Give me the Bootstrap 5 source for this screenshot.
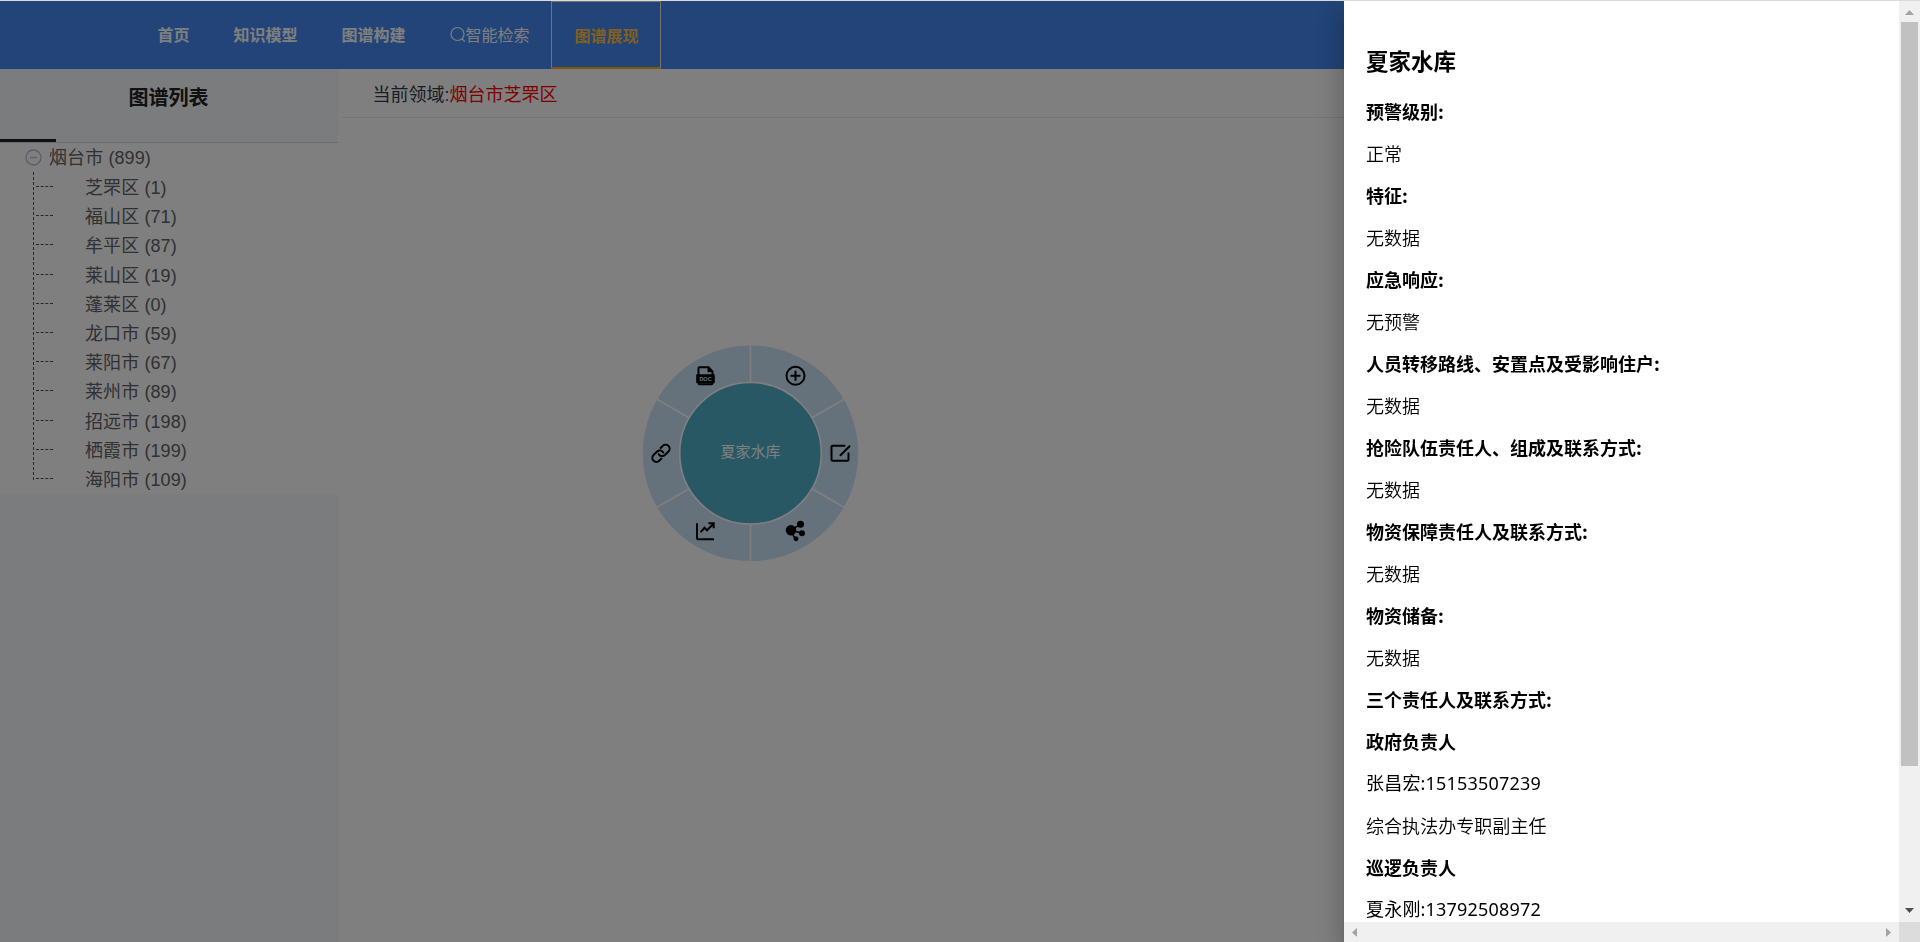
<!DOCTYPE html>
<html lang="zh-CN">
<head>
<meta charset="utf-8">
<meta name="viewport" content="width=device-width, initial-scale=1">
<title>图谱展现</title>
<link href="https://cdn.jsdelivr.net/npm/bootstrap@5.3.0/dist/css/bootstrap.min.css" rel="stylesheet">
<style>
  html, body { height: 100%; overflow: hidden; }
  body { font-family: "Liberation Sans", "Noto Sans CJK SC", sans-serif; color: #303133; background: #fff; font-size: 18px; }
  .topnav { height: 69px; background: #4488f0; border-top: 1px solid #dadada; padding-left: 135px; box-sizing: border-box; }
  .topnav .nav-link { color: #fff; font-size: 16px; line-height: 69px; height: 68px; padding: 0 21.5px 0 22.5px; border: 0; }
  .topnav .nav-link.current { color: #ffc040; line-height: 70px; border: 1px solid #e8e8e8; border-bottom: 2px solid #ffb01e; }
  .side { width: 338px; background: #f6f9fd; }
  .side-head { height: 74px; border-bottom: 1px solid #cfdce6; position: relative; }
  .side-head h1 { font-size: 20px; line-height: 58px; margin: 0 1px 0 0; color: #222; }
  .side-head::after { content: ""; position: absolute; left: 0; bottom: 0; width: 56px; height: 3px; background: #222; }
  .tree { background: #fff; height: 351px; color: #606266; }
  .tree-root { height: 29px; line-height: 31px; padding-left: 25px; gap: 7px; }
  .tree-root span { padding-top: 2px; letter-spacing: .1px; }
  .tree-kids { margin-left: 33px; position: relative; }
  .tree-kids li { height: 29.2px; line-height: 33px; padding-left: 52px; position: relative; letter-spacing: .1px; }
  .tree-kids li::before { content: ""; position: absolute; left: 3px; top: 14px; width: 17px; border-top: 1px dashed #4a4f62; }
  .tree-kids::before { content: ""; position: absolute; left: 0; top: 0; height: 308px; border-left: 1px dashed #4a4f62; }
  .domain { height: 49px; line-height: 52px; padding-left: 30.500px; margin-left: 4px; border-bottom: 1px solid #e8e8e8; color: #303848; }
  .domain span { color: #f00; }
  .wheel { width: 217px; height: 217px; margin: 227px 0 0 304px; display: block; }
  .veil { background: rgba(0,0,0,.5); z-index: 10; top: 1px; }
  .detail { z-index: 20; top: 1px; right: 0; bottom: 0; width: 576px; background: #fff; color: #000;
    font-family: "Noto Sans CJK SC", sans-serif; 
    box-shadow: 0 8px 10px -5px rgba(0,0,0,.2), 0 16px 24px 2px rgba(0,0,0,.14), 0 6px 30px 5px rgba(0,0,0,.12); clip-path: inset(0 0 0 -60px); }
  .topline { top: 0; height: 1px; background: #dadada; z-index: 30; }
  .detail-body { padding: 38px 0 0 22px; height: 921px; }
  .detail-body h2 { font-size: 22.5px; line-height: 42px; margin: 0 0 9px; font-weight: 700; }
  .detail-body p { font-size: 18px; line-height: 42px; margin: 0; height: 42px; white-space: nowrap; }
  .detail-body p:not(.fw-bold) { font-weight: 350; letter-spacing: .05px; }
  .detail-body p.phone:not(.fw-bold) { font-family: "Noto Sans", "Noto Sans CJK SC", sans-serif; font-weight: 400; letter-spacing: .2px; }
  .bar-v { width: 21px; background: #f0f0f0; }
  .bar-h { height: 20px; background: #f0f0f0; }
  .thumb { width: 17px; height: 744px; background: #c1c1c1; margin-left: 2px; }
  .corner { width: 21px; background: #dcdcdc; }
</style>
</head>
<body>
<div class="d-flex flex-column vh-100">
  <nav class="topnav nav flex-nowrap flex-shrink-0">
    <a class="nav-link fw-bold">首页</a>
    <a class="nav-link fw-bold">知识模型</a>
    <a class="nav-link fw-bold">图谱构建</a>
    <a class="nav-link d-flex"><svg width="16" height="68" viewBox="0 -26 16 68" fill="none" stroke="#fff" stroke-width="1.2"><circle cx="7.500" cy="7" r="6.500"/><path d="M11.500 11.500l3.500 3"/></svg>智能检索</a>
    <a class="nav-link current fw-bold">图谱展现</a>
  </nav>
  <div class="d-flex flex-grow-1">
    <aside class="side flex-shrink-0">
      <div class="side-head text-center"><h1 class="fw-bold">图谱列表</h1></div>
      <div class="tree">
        <div class="tree-root d-flex align-items-center"><svg width="17" height="17" viewBox="0 0 17 17" fill="none" stroke="#b4bccc" stroke-width="1.3"><circle cx="8.5" cy="8.5" r="7.5"/><path d="M5 8.5h7"/></svg><span>烟台市 (899)</span></div>
        <ul class="tree-kids list-unstyled mb-0">
          <li>芝罘区 (1)</li><li>福山区 (71)</li><li>牟平区 (87)</li><li>莱山区 (19)</li><li>蓬莱区 (0)</li><li>龙口市 (59)</li><li>莱阳市 (67)</li><li>莱州市 (89)</li><li>招远市 (198)</li><li>栖霞市 (199)</li><li>海阳市 (109)</li>
        </ul>
      </div>
    </aside>
    <main class="flex-grow-1">
      <div class="domain">当前领域:<span>烟台市芝罘区</span></div>
      <svg class="wheel" viewBox="-108.500 -108.300 217 217">
        <circle r="107.8" fill="#cce4f7"/>
        <g stroke="#fff" stroke-width="1.6"><path d="M0-108V108M-93.5-54L93.5 54M-93.5 54L93.5-54"/></g>
        <circle r="70.8" fill="#50b0c8" stroke="#fff" stroke-width="1.6"/>
        <text y="3.500" text-anchor="middle" font-size="15" fill="#fff">夏家水库</text>
        <g fill="none" stroke="#000" stroke-width="2">
          <g transform="translate(45 -77.500)"><circle r="9"/><path d="M-5 0H5M0-5V5"/></g>
          <g transform="translate(89.500 0)" stroke-linecap="round"><path d="M4.500-7.500H-7.500Q-8.500-7.500-8.500-6.500V6.500Q-8.500 7.500-7.500 7.500H7.500Q8.500 7.500 8.500 6.500V0M.5 2L9.500-7"/></g>
          <g transform="translate(45 78)" fill="#000" stroke-width="1.500"><path d="M-5-1L5-7M-5-1L7 2M-5-1L0 8" /><circle cx="-4.500" cy="-1" r="4.500"/><circle cx="5" cy="-7" r="2.800"/><circle cx="6.500" cy="2" r="2.200"/><circle cx=".5" cy="7.500" r="1.700"/></g>
          <g transform="translate(-45 78)"><path d="M-8.500-8V6.500Q-8.500 8-7 8H8.500M-5 1L-1-3.500L1.500-1L8-7.500M3-8H8.200V-3"/></g>
          <g transform="translate(-89.500 0) rotate(-45)" stroke-linecap="round"><path d="M-3.500 4H-6.500A4 4 0 0 1-6.500-4H-1.500A4 4 0 0 1 2.200 1M3.500-4H6.500A4 4 0 0 1 6.500 4H1.500A4 4 0 0 1-2.200-1"/></g>
          <g transform="translate(-45 -77.500)"><path d="M-7 0V-7.500Q-7-8.500-6-8.500H3L7-4.500V0M3-8V-4.500H7M-7 5V7.500Q-7 8.500-6 8.500H6Q7 8.500 7 7.500V5" stroke-width="2"/><rect x="-9.300" y="-1.500" width="18.600" height="9" rx="1" fill="#000" stroke="none"/><text y="5" text-anchor="middle" font-size="5.500" font-weight="700" fill="#cce4f7" stroke="none">DOC</text></g>
        </g>
      </svg>
    </main>
  </div>
</div>
<div class="veil position-fixed start-0 end-0 bottom-0"></div>
<div class="topline position-fixed start-0 end-0"></div>
<div class="detail position-fixed d-flex flex-column">
  <div class="d-flex flex-grow-1">
    <div class="detail-body flex-grow-1 overflow-hidden">
      <h2>夏家水库</h2>
      <p class="fw-bold">预警级别:</p><p>正常</p>
      <p class="fw-bold">特征:</p><p>无数据</p>
      <p class="fw-bold">应急响应:</p><p>无预警</p>
      <p class="fw-bold">人员转移路线、安置点及受影响住户:</p><p>无数据</p>
      <p class="fw-bold">抢险队伍责任人、组成及联系方式:</p><p>无数据</p>
      <p class="fw-bold">物资保障责任人及联系方式:</p><p>无数据</p>
      <p class="fw-bold">物资储备:</p><p>无数据</p>
      <p class="fw-bold">三个责任人及联系方式:</p>
      <p class="fw-bold">政府负责人</p><p class="phone">张昌宏:15153507239</p><p>综合执法办专职副主任</p>
      <p class="fw-bold">巡逻负责人</p><p class="phone">夏永刚:13792508972</p>
    </div>
    <div class="bar-v flex-shrink-0 d-flex flex-column">
      <svg width="21" height="21"><path d="M6 14L10.500 9L15 14z" fill="#a3a3a3"/></svg>
      <div class="thumb"></div>
      <svg class="mt-auto" width="21" height="21"><path d="M6 7L10.500 12L15 7z" fill="#505050"/></svg>
    </div>
  </div>
  <div class="d-flex flex-shrink-0">
    <div class="bar-h d-flex justify-content-between flex-grow-1">
      <svg width="21" height="20"><path d="M13 6L8 10.500L13 15z" fill="#a3a3a3"/></svg>
      <svg width="21" height="20"><path d="M8 6L13 10.500L8 15z" fill="#a3a3a3"/></svg>
    </div>
    <div class="corner"></div>
  </div>
</div>
<script src="https://cdn.jsdelivr.net/npm/bootstrap@5.3.0/dist/js/bootstrap.bundle.min.js"></script>
</body>
</html>
